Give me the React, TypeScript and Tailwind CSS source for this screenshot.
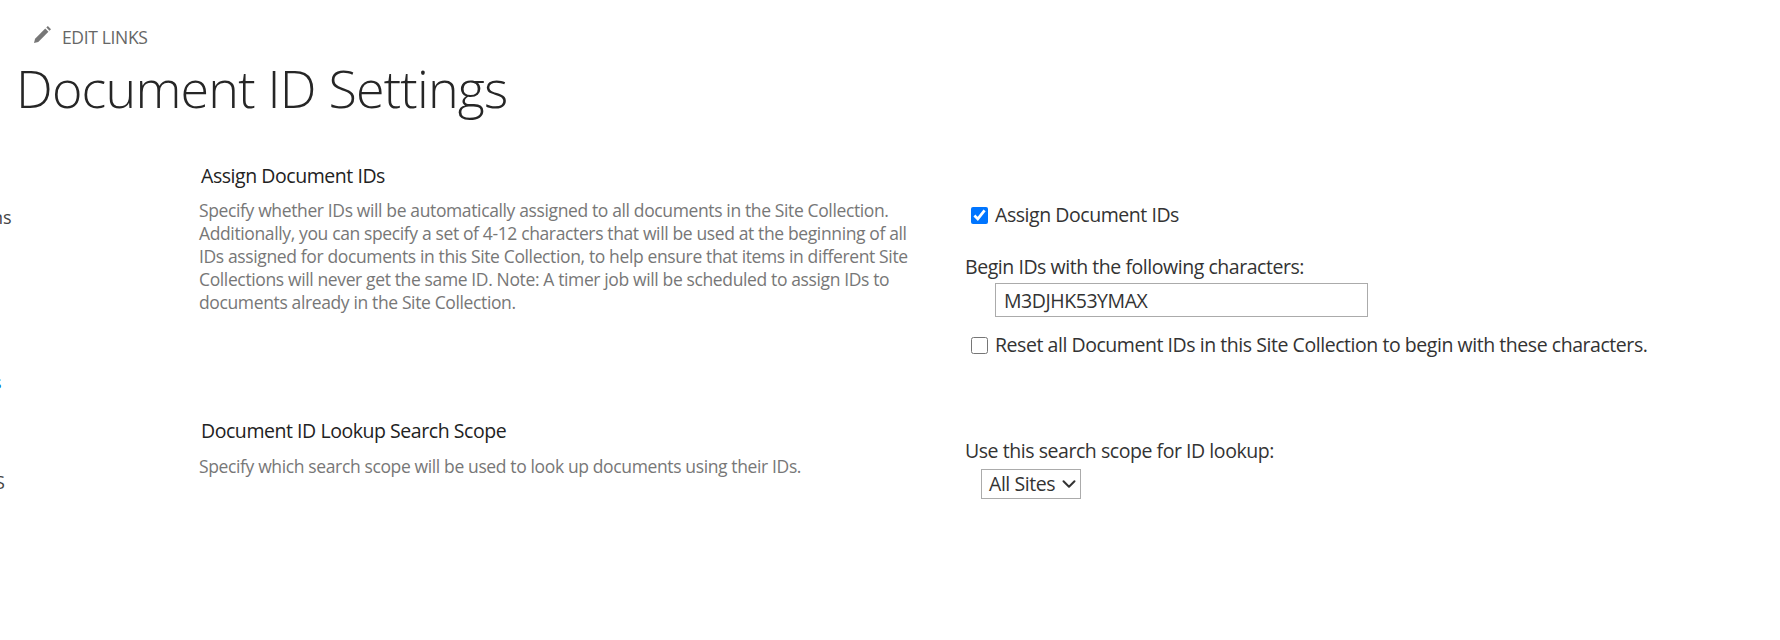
import React from 'react';
import { ChevronDown } from 'lucide-react';

const font = "font-['Open_Sans','Noto_Sans',sans-serif]";

const EditIcon = () => (
  <svg width="17" height="17" viewBox="0 0 16 16" className="mb-[4px] shrink-0 fill-[#777]">
    <path d="M0 16 L1 12 L10.6 2.4 L13.6 5.4 L4 15 Z" />
    <path d="M11.6 1.4 L13 0 L16 3 L14.6 4.4 Z" />
  </svg>
);

const App: React.FC = () => {
  return (
    <div className={`h-[640px] w-[1780px] overflow-hidden bg-white ${font}`}>
      <div className="flex h-[74px] items-end pb-[27px] pl-[34px]">
        <EditIcon />
        <span className="ml-[11px] text-[17.5px] leading-[20px] tracking-[-0.35px] text-[#666]">EDIT LINKS</span>
      </div>

      <h1 className="-mt-[21px] pl-[16px] text-[52px] font-light leading-[70px] tracking-[-0.8px] text-[#262626]">Document ID Settings</h1>

      <div className="mt-[41px] flex">
        {/* clipped quick launch */}
        <div className="w-[199px] shrink-0 overflow-hidden text-[18px]">
          <div className="mt-[42px] -ml-[8px] leading-[22px] text-[#444]">ns</div>
          <div className="mt-[143px] -ml-[7px] leading-[22px] text-[#0072c6]">s</div>
          <div className="mt-[78px] -ml-[5px] leading-[22px] text-[#444]">S</div>
        </div>

        <div className="w-[766px] shrink-0">
          <h2 className="pl-[2px] text-[19.5px] leading-[24px] tracking-[-0.45px] text-[#222]">Assign Document IDs</h2>
          <p className="mt-[11px] w-[730px] text-[17.5px] leading-[23px] tracking-[-0.37px] text-[#777]">
            Specify whether IDs will be automatically assigned to all documents in the Site Collection. Additionally, you can specify a set of 4-12 characters that will be used at the beginning of all IDs assigned for documents in this Site Collection, to help ensure that items in different Site Collections will never get the same ID. Note: A timer job will be scheduled to assign IDs to documents already in the Site Collection.
          </p>
          <h2 className="mt-[105px] pl-[2px] text-[19.5px] leading-[24px] tracking-[-0.45px] text-[#222]">Document ID Lookup Search Scope</h2>
          <p className="mt-[12px] text-[17.5px] leading-[23px] tracking-[-0.37px] text-[#777]">Specify which search scope will be used to look up documents using their IDs.</p>
        </div>

        <div className="pt-[39px] text-[19.5px] tracking-[-0.45px] text-[#333]">
          <label className="ml-[6px] flex h-[24px] items-center">
            <input type="checkbox" defaultChecked className="m-0 h-[17px] w-[17px] accent-[#0075ff]" />
            <span className="ml-[7px]">Assign Document IDs</span>
          </label>
          <div className="mt-[28px] leading-[24px]">Begin IDs with the following characters:</div>
          <input
            readOnly
            value="M3DJHK53YMAX"
            className="ml-[30px] mt-[4px] block h-[34px] w-[373px] border border-[#ababab] pl-[8px] text-[#333] outline-none"
          />
          <label className="ml-[6px] mt-[16px] flex h-[24px] items-center">
            <input type="checkbox" className="m-0 h-[17px] w-[17px]" />
            <span className="ml-[7px] whitespace-nowrap">Reset all Document IDs in this Site Collection to begin with these characters.</span>
          </label>
          <div className="mt-[82px] leading-[24px]">Use this search scope for ID lookup:</div>
          <div className="ml-[16px] mt-[6px] flex h-[30px] w-[100px] items-center border border-[#ababab] pl-[7px]">
            <span>All Sites</span>
            <ChevronDown size={22} strokeWidth={2.2} className="ml-[3px] shrink-0 text-[#333]" />
          </div>
        </div>
      </div>
    </div>
  );
};

export default App;
